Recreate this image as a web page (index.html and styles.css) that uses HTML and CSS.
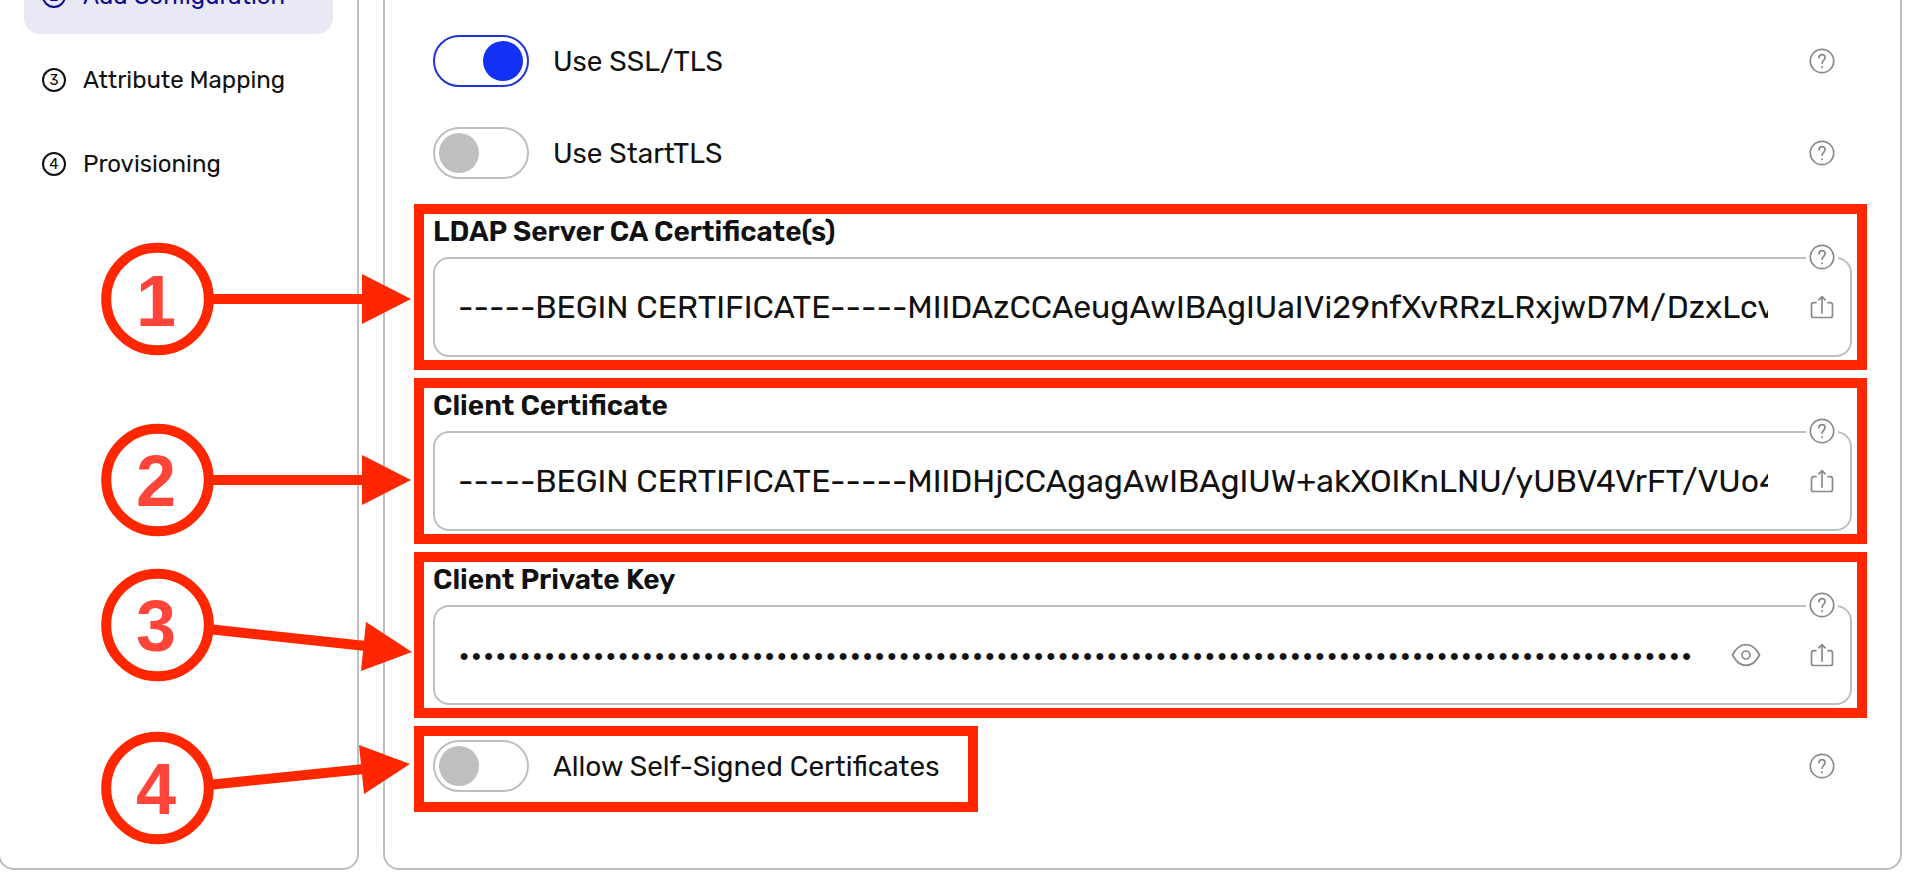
FILE: index.html
```html
<!DOCTYPE html>
<html lang="en">
<head>
    <meta charset="utf-8">
    <meta name="viewport" content="width=device-width, initial-scale=1">
    <title>LDAP - Add Configuration</title>
    <link rel="stylesheet" href="styles.css">
</head>
<body>
<!-- shared icons -->
<svg class="sprite" aria-hidden="true">
    <symbol id="icon-help" viewBox="0 0 26 26">
        <circle cx="13" cy="13" r="11.7"/>
        <path d="M10 9.8c0-2 1.3-3.2 3-3.2s3.1 1.2 3.1 3c0 2.8-3 2.6-3 5.6"/>
        <path d="M13 18.8v.6"/>
    </symbol>
    <symbol id="icon-share" viewBox="0 0 24 24">
        <path d="M6 7.7H3.5A2.3 2.3 0 0 0 1.5 10V20.500A2 2 0 0 0 3.500 22.500h17a2 2 0 0 0 2-2V10a2.300 2.300 0 0 0-2-2.300H18"/>
        <path d="M12 18V2M8.800 4.800 12 1.600l3.200 3.200"/>
    </symbol>
    <symbol id="icon-eye" viewBox="0 0 30 24">
        <path d="M1.500 12C5 5 9.500 1.700 15 1.700S25 5 28.500 12C25 19 20.500 22.300 15 22.300S5 19 1.500 12z"/>
        <circle cx="15" cy="12" r="4"/>
    </symbol>
</svg>

<div class="layout">
    <nav class="sidebar">
        <a class="step active" href="#configuration"><span class="number">2</span>Add Configuration</a>
        <a class="step" href="#mapping"><span class="number">3</span>Attribute Mapping</a>
        <a class="step" href="#provisioning"><span class="number">4</span>Provisioning</a>
    </nav>

    <main class="panel">
        <div class="toggle-row">
            <label class="toggle"><input type="checkbox" checked>Use SSL/TLS</label>
            <button class="icon-button" type="button" aria-label="Help"><svg class="icon-help"><use href="#icon-help"/></svg></button>
        </div>
        <div class="toggle-row">
            <label class="toggle"><input type="checkbox">Use StartTLS</label>
            <button class="icon-button" type="button" aria-label="Help"><svg class="icon-help"><use href="#icon-help"/></svg></button>
        </div>

        <div class="marked">
            <label class="field-label" for="ca-cert">LDAP Server CA Certificate(s)</label>
            <div class="field">
                <input type="text" id="ca-cert" value="-----BEGIN CERTIFICATE-----MIIDAzCCAeugAwIBAgIUaIVi29nfXvRRzLRxjwD7M/DzxLcv">
                <button class="icon-button" type="button" aria-label="Upload"><svg class="icon-share"><use href="#icon-share"/></svg></button>
                <button class="icon-button field-help" type="button" aria-label="Help"><svg class="icon-help"><use href="#icon-help"/></svg></button>
            </div>
        </div>

        <div class="marked">
            <label class="field-label" for="client-cert">Client Certificate</label>
            <div class="field">
                <input type="text" id="client-cert" value="-----BEGIN CERTIFICATE-----MIIDHjCCAgagAwIBAgIUW+akXOIKnLNU/yUBV4VrFT/VUo4">
                <button class="icon-button" type="button" aria-label="Upload"><svg class="icon-share"><use href="#icon-share"/></svg></button>
                <button class="icon-button field-help" type="button" aria-label="Help"><svg class="icon-help"><use href="#icon-help"/></svg></button>
            </div>
        </div>

        <div class="marked">
            <label class="field-label" for="client-key">Client Private Key</label>
            <div class="field">
                <input type="password" id="client-key" value="12345678901234567890123456789012345678901234567890123456789012345678901234567890123456789012345678901">
                <button class="icon-button eye" type="button" aria-label="Show key"><svg class="icon-eye"><use href="#icon-eye"/></svg></button>
                <button class="icon-button" type="button" aria-label="Upload"><svg class="icon-share"><use href="#icon-share"/></svg></button>
                <button class="icon-button field-help" type="button" aria-label="Help"><svg class="icon-help"><use href="#icon-help"/></svg></button>
            </div>
        </div>

        <div class="toggle-row last">
            <div class="marked">
                <label class="toggle"><input type="checkbox">Allow Self-Signed Certificates</label>
            </div>
            <button class="icon-button" type="button" aria-label="Help"><svg class="icon-help"><use href="#icon-help"/></svg></button>
        </div>
    </main>
</div>

<!-- numbered callouts -->
<svg class="callouts" viewBox="0 0 420 896">
    <g class="rings">
        <circle cx="157.5" cy="299" r="51.3"/>
        <circle cx="157.5" cy="480" r="51.3"/>
        <circle cx="157.5" cy="625" r="51.3"/>
        <circle cx="157.5" cy="788" r="51.3"/>
        <path d="M208 299H364M208 480H364M208 629 366 646M208 785 364 769"/>
    </g>
    <g class="heads">
        <path d="M362 274 411 299 362 324z"/>
        <path d="M362 455 411 480 362 505z"/>
        <path d="M366 622 412 652 361 671z"/>
        <path d="M359 745 410 764 364 794z"/>
    </g>
    <g class="digits">
        <text x="156" y="326">1</text>
        <text x="156" y="506">2</text>
        <text x="156" y="651">3</text>
        <text x="156" y="814">4</text>
    </g>
</svg>
</body>
</html>
```
FILE: styles.css
```css
* {
    box-sizing: border-box;
}
body {
    margin: 0;
    min-height: 100vh;
    overflow: hidden;
    position: relative;
    background: #fff;
    color: #111;
    font-family: Rubik, Roboto, sans-serif;
    font-size: 28px;
}
.sprite {
    position: absolute;
    width: 0;
    height: 0;
}
.layout {
    display: flex;
    gap: 24px;
    padding-right: 28px;
}
.sidebar,
.panel {
    border: 2px solid #bfbfbf;
    border-top: 0;
    border-radius: 0 0 16px 16px;
}

/* steps */
.sidebar {
    flex: 0 0 361px;
    margin-left: -2px;
    padding: 0 24px;
}
.step {
    display: flex;
    align-items: center;
    gap: 17px;
    height: 74px;
    margin-bottom: 10px;
    padding: 0 0 2px 18px;
    border-radius: 16px;
    color: #111;
    font-size: 24px;
    text-decoration: none;
}
.step.active {
    margin-top: -40px;
    background: #e9e9f6;
    color: #0d0d8c;
}
.number {
    width: 24px;
    height: 24px;
    border: 2px solid;
    border-radius: 50%;
    font-size: 15px;
    line-height: 20px;
    text-align: center;
}

/* form */
.panel {
    flex: 1;
    min-width: 0;
    padding: 35px 33px 56px 29px;
}
.toggle-row {
    display: flex;
    align-items: center;
    justify-content: space-between;
    margin-bottom: 40px;
    padding: 0 32px 0 19px;
}
.toggle-row + .marked {
    margin-top: -15px;
}
.toggle {
    display: flex;
    align-items: center;
    gap: 24px;
}
.toggle input {
    appearance: none;
    width: 96px;
    height: 52px;
    margin: 0;
    padding: 4px;
    border: 2px solid #bfbfbf;
    border-radius: 26px;
}
.toggle input::before {
    content: "";
    display: block;
    width: 40px;
    height: 40px;
    border-radius: 50%;
    background: #bfbfbf;
}
.toggle input:checked {
    border-color: #2036d0;
}
.toggle input:checked::before {
    margin-left: auto;
    background: #1330f5;
}
.marked {
    margin-bottom: 8px;
    padding: 0 5px 3px 9px;
    border: 10px solid #ff2600;
}
.field-label {
    display: block;
    margin-bottom: 7px;
    font-weight: 600;
    line-height: 36px;
}
.field {
    position: relative;
    display: flex;
    align-items: center;
    height: 100px;
    padding: 0 16px 0 23px;
    border: 2px solid #bfbfbf;
    border-radius: 16px;
}
.field input {
    flex: 1;
    min-width: 0;
    height: 48px;
    margin-right: 42px;
    padding: 0;
    border: 0;
    outline: 0;
    background: none;
    color: #111;
    font-family: inherit;
    font-size: 32px;
}
.field input[type="password"] {
    margin-right: 36px;
}
.icon-button {
    display: flex;
    padding: 0;
    border: 0;
    background: none;
}
.icon-button svg {
    fill: none;
    stroke: #8a8a8a;
    stroke-width: 1.7;
    stroke-linecap: round;
    stroke-linejoin: round;
}
.icon-help {
    width: 26px;
    height: 26px;
}
.icon-share {
    width: 24px;
    height: 24px;
}
.icon-eye {
    width: 30px;
    height: 24px;
}
.eye {
    margin-right: 49px;
}
.field-help {
    position: absolute;
    top: -15px;
    right: 12px;
    padding: 0 3px;
    background: #fff;
}
.toggle-row.last {
    margin: 0;
    padding-left: 0;
}
.last .marked {
    margin: 0;
    padding: 4px 29px 10px 9px;
}
.last .icon-button {
    padding-bottom: 6px;
}

/* callouts */
.callouts {
    position: absolute;
    top: 0;
    left: 0;
    width: 420px;
    height: 896px;
    pointer-events: none;
}
.rings {
    fill: none;
    stroke: #ff2600;
    stroke-width: 10;
}
.heads {
    fill: #ff2600;
}
.digits {
    fill: #ff443a;
    font-family: "Liberation Sans", sans-serif;
    font-size: 72px;
    font-weight: bold;
    text-anchor: middle;
}
```
